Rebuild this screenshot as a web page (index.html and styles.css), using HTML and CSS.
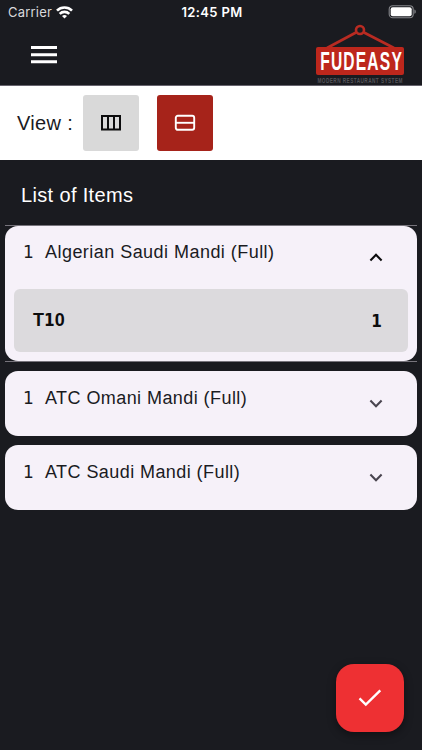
FILE: index.html
```html
<!DOCTYPE html>
<html lang="en">

<head>
	<meta charset="UTF-8">
	<meta name="viewport" content="width=device-width,initial-scale=1">
	<title>Fudeasy</title>
	<link rel="stylesheet" href="styles.css">
</head>

<body>
	<header class="header">
		<div class="status-bar">
			<div class="carrier">
				<span class="carrier-name">Carrier</span>
				<svg width="17" height="13" viewBox="0 0 17 13" fill="none" stroke="#fff" stroke-width="2.6">
					<path d="M1 4.6a10.6 10.6 0 0 1 15 0" />
					<path d="M3.7 7.9a6.8 6.8 0 0 1 9.6 0" />
					<path d="M8.5 12.6 6 10.1a3.6 3.6 0 0 1 5 0z" fill="#fff" stroke="none" />
				</svg>
			</div>
			<span class="clock">12:45 PM</span>
			<svg class="battery" width="28" height="14" viewBox="0 0 28 14">
				<rect x="1.2" y=".7" width="24" height="12" rx="3.5" fill="none" stroke="#85868a" stroke-width="1.1" />
				<rect x="2.7" y="2.2" width="21" height="9" rx="2" fill="#fff" />
				<path d="M26.4 4.6c1.8.7 1.8 3.5 0 4.2z" fill="#85868a" />
			</svg>
		</div>
		<div class="nav-bar">
			<svg class="menu-icon" width="26" height="18" viewBox="0 0 26 18" fill="#fff">
				<path d="M0 0h26v3H0zM0 7.2h26v3H0zM0 14.3h26v3H0z" />
			</svg>
			<svg class="logo" width="90" height="61" viewBox="0 0 90 61">
				<path d="M12 24 41 8.5M49 8.5 79 24" stroke="#b92b22" stroke-width="2.6" />
				<circle cx="45" cy="6" r="4" fill="none" stroke="#b92b22" stroke-width="2.6" />
				<rect x="1" y="23" width="88" height="28" rx="2" fill="#bd271c" />
				<text class="logo-name" transform="translate(5.2 46.4) scale(.6 1)" textLength="136">FUDEASY</text>
				<text class="logo-tag" transform="translate(2.5 59) scale(.62 1)" textLength="137">MODERN RESTAURANT SYSTEM</text>
			</svg>
		</div>
	</header>

	<section class="view-bar">
		<span class="view-label">View :</span>
		<button class="view-btn">
			<svg width="22" height="18" viewBox="0 0 22 18" fill="none" stroke="#0c0c0d" stroke-width="2">
				<path d="M2 2h18v13.5H2zM8 2v13.5M14 2v13.5" />
			</svg>
		</button>
		<button class="view-btn active">
			<svg width="22" height="18" viewBox="0 0 22 18" fill="none" stroke="#fff" stroke-width="1.9">
				<rect x="1.8" y="1.8" width="18.4" height="14" rx="2" />
				<path d="M2 8.8h18" />
			</svg>
		</button>
	</section>

	<main class="items">
		<h1 class="items-title">List of Items</h1>
		<div class="expanded">
			<div class="card">
				<div class="card-head">
					<span class="qty">1</span>
					<span class="name name-first">Algerian Saudi Mandi (Full)</span>
					<svg class="chevron open" width="14" height="9" viewBox="0 0 14 9"><path d="M1.4 7.4 7 1.8l5.6 5.6" /></svg>
				</div>
				<div class="table-row">
					<span class="table-name">T<span class="digit">1</span>0</span>
					<span class="digit">1</span>
				</div>
			</div>
		</div>
		<div class="card">
			<div class="card-head">
				<span class="qty">1</span>
				<span class="name">ATC Omani Mandi (Full)</span>
				<svg class="chevron" width="14" height="9" viewBox="0 0 14 9"><path d="M1.4 1.6 7 7.2l5.6-5.6" /></svg>
			</div>
		</div>
		<div class="card">
			<div class="card-head">
				<span class="qty">1</span>
				<span class="name">ATC Saudi Mandi (Full)</span>
				<svg class="chevron" width="14" height="9" viewBox="0 0 14 9"><path d="M1.4 1.6 7 7.2l5.6-5.6" /></svg>
			</div>
		</div>
	</main>

	<button class="fab">
		<svg width="24" height="18" viewBox="0 0 24 18" fill="none" stroke="#fff" stroke-width="2.4">
			<path d="m1.5 9.4 6.3 6.2L22.3 1.4" />
		</svg>
	</button>
</body>

</html>
```

FILE: styles.css
```css
:root {
	--dark: #1a1b20;
	--red: #a6231a;
	--card: #f6f1f9;
}

* {
	box-sizing: border-box;
}

body {
	margin: 0;
	height: 750px;
	overflow: hidden;
	background: var(--dark);
	color: #1a1b1f;
	font-family: "Liberation Sans", Arial, sans-serif;
}

svg {
	display: block;
	flex: none;
}

button {
	border: 0;
	padding: 0;
	display: flex;
	align-items: center;
	justify-content: center;
}

.header {
	height: 86px;
	border-bottom: 1px solid #66636d;
}

.status-bar {
	height: 24px;
	padding: 0 6px 0 8px;
	display: grid;
	grid-template-columns: 1fr auto 1fr;
	align-items: center;
	color: #fff;
	font-family: Inter, sans-serif;
	font-size: 13px;
}

.carrier {
	display: flex;
	align-items: center;
	gap: 4px;
}

.carrier-name {
	color: #d9d9dc;
	letter-spacing: 0.2px;
}

.clock {
	font-weight: 600;
	letter-spacing: 0.35px;
}

.battery {
	justify-self: end;
}

.nav-bar {
	display: flex;
	justify-content: space-between;
	padding: 0 17px 0 31px;
}

.menu-icon {
	margin-top: 22px;
}

.logo-name {
	font-size: 26px;
	font-weight: 700;
	fill: #fff;
}

.logo-tag {
	font-size: 7.6px;
	font-weight: 700;
	fill: #55555a;
}

.view-bar {
	height: 74px;
	padding: 0 17px;
	display: flex;
	align-items: center;
	background: #fff;
}

.view-label {
	width: 66px;
	font-size: 20px;
	letter-spacing: 0.35px;
	white-space: nowrap;
}

.view-btn {
	width: 56px;
	height: 56px;
	margin-right: 18px;
	border-radius: 3px;
	background: #d9d9d9;
}

.view-btn.active {
	background: var(--red);
}

.items-title {
	margin: 0;
	height: 65px;
	padding: 0 21px;
	line-height: 70px;
	color: #fff;
	font-size: 20px;
	font-weight: 400;
	letter-spacing: 0.35px;
}

.expanded {
	margin: 0 5px 9px;
	border-top: 1px solid #77747c;
	border-bottom: 1px solid #77747c;
}

.card {
	height: 65px;
	margin: 0 5px 9px;
	border-radius: 13px;
	background: var(--card);
}

.expanded .card {
	height: 135px;
	margin: 0;
}

.card-head {
	height: 63px;
	padding: 14px 34px 0 18px;
	display: flex;
	font-size: 18px;
	line-height: 26px;
}

.expanded .card-head {
	padding-top: 13px;
}

.qty {
	width: 22px;
	font-family: "DejaVu Sans", sans-serif;
	font-size: 17px;
}

.name {
	flex: 1;
	letter-spacing: 0.43px;
	white-space: nowrap;
}

.name-first {
	letter-spacing: 0.46px;
}

.chevron {
	margin-top: 14px;
	fill: none;
	stroke: #49454f;
	stroke-width: 2.1;
}

.chevron.open {
	stroke: #0c0c0d;
}

.table-row {
	height: 63px;
	margin: 0 9px;
	padding: 0 26px 0 19px;
	display: flex;
	align-items: center;
	justify-content: space-between;
	border-radius: 6px;
	background: #dcdadd;
	color: #0c0c0d;
	font-size: 18px;
	font-weight: 700;
}

.digit {
	font-family: "DejaVu Sans Condensed", "DejaVu Sans", sans-serif;
	font-size: 17px;
}

.fab {
	position: fixed;
	right: 18px;
	bottom: 18px;
	width: 68px;
	height: 68px;
	border-radius: 18px;
	background: #ee3033;
	box-shadow: 0 3px 8px rgba(0, 0, 0, 0.4);
}
```
